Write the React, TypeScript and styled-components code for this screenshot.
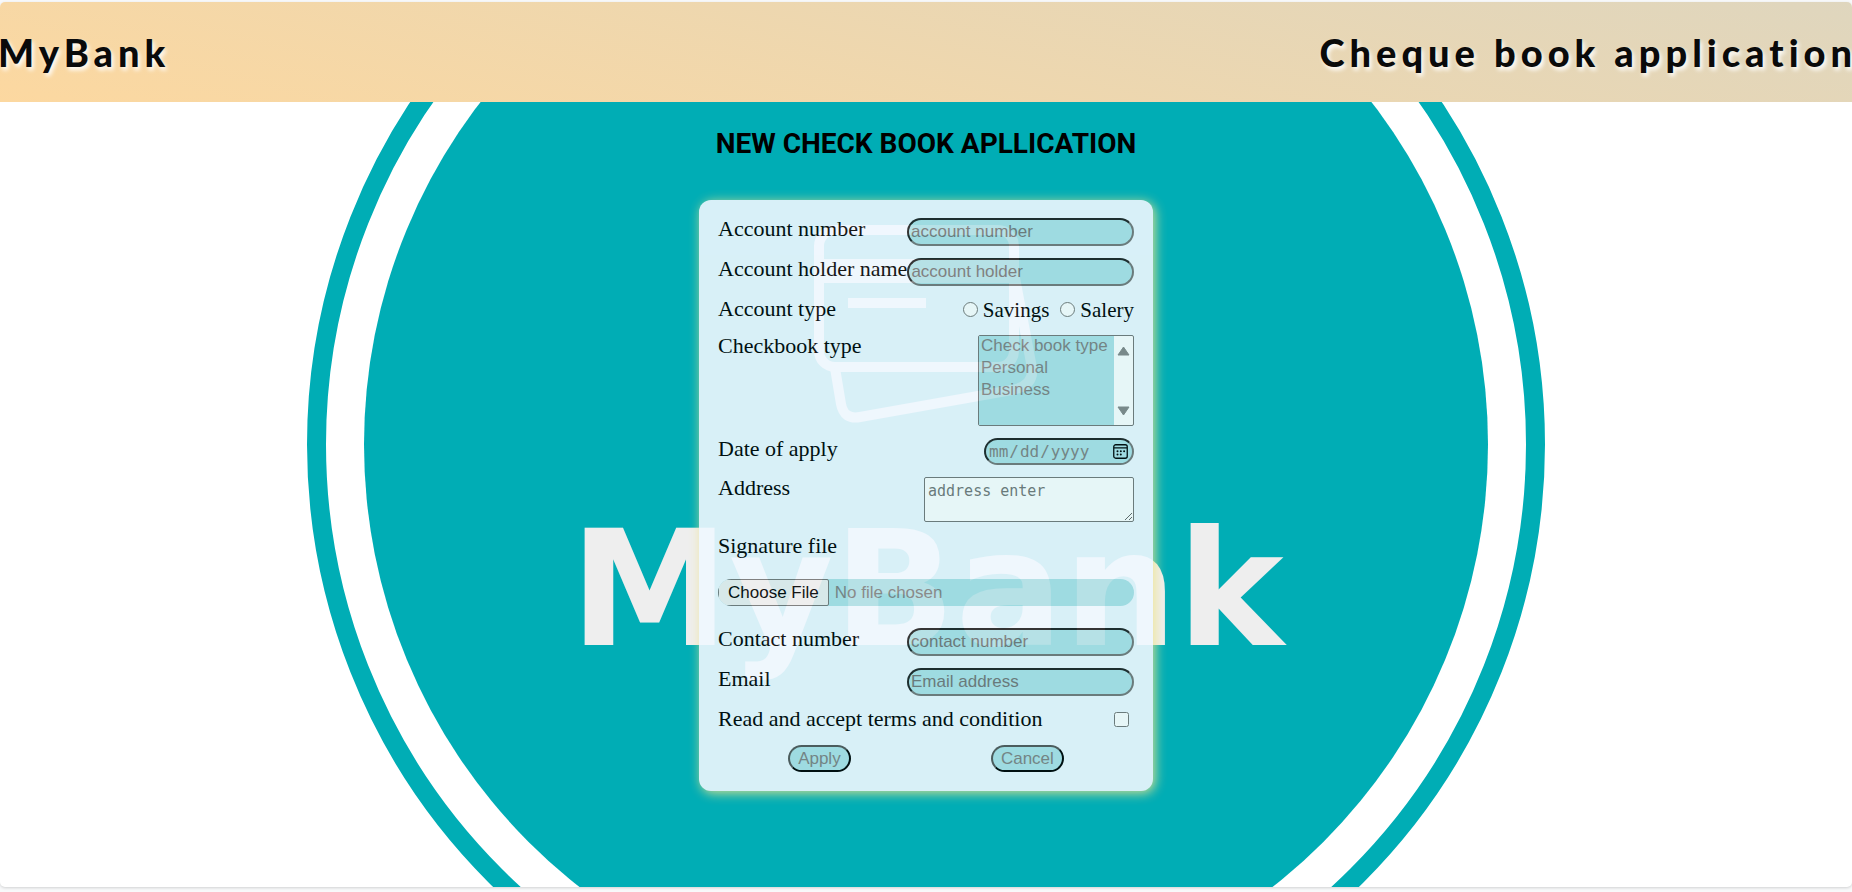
import React from "react";
import styled, { createGlobalStyle } from "styled-components";

const GlobalStyle = createGlobalStyle`
  *, *::before, *::after { box-sizing: border-box; }
  body {
    margin: 0;
    background: #f8f9fa;
    overflow-x: hidden;
    font-family: "Liberation Serif", "Times New Roman", serif;
  }
`;

const sans = `"Liberation Sans", Arial, sans-serif`;
const mono = `"DejaVu Sans Mono", Consolas, monospace`;

const calendarIcon = `data:image/svg+xml,${encodeURIComponent(
  `<svg xmlns="http://www.w3.org/2000/svg" viewBox="0 0 15 15"><rect x=".75" y=".75" width="13.500" height="13.500" rx="2" fill="none" stroke="#000" stroke-width="1.300"/><path d="M1 3.800H14" stroke="#000" stroke-width="1.200"/><g fill="#000"><circle cx="4.500" cy="7.200" r="1"/><circle cx="7.800" cy="7.200" r="1"/><circle cx="11.100" cy="7.200" r="1"/><circle cx="4.500" cy="10.600" r="1"/><circle cx="7.800" cy="10.600" r="1"/></g></svg>`
)}`;

const Page = styled.div`
  position: relative;
  min-height: calc(100vh - 7px);
  margin: 2px 0 5px;
  border-radius: 5px;
  background: #fff;
  box-shadow: 0 1px 3px rgba(0, 0, 0, 0.16);
  overflow: hidden;
`;

const Backdrop = styled.svg`
  position: absolute;
  inset: 0;
  width: 100%;
  height: 100%;
`;

const Header = styled.header`
  position: relative;
  display: flex;
  justify-content: space-between;
  align-items: center;
  height: 100px;
  margin: 0 -5px 0 -2px;
  background: linear-gradient(15deg, #fcd8a0, #dfd6be);
`;

const Brand = styled.h1`
  margin: 0;
  color: #0a0a0a;
  font: 900 38px/48px Lato, "Gill Sans", sans-serif;
  letter-spacing: 5px;
  white-space: nowrap;
  text-shadow: 2px 3px 4px #fff;
`;

const Main = styled.main`
  position: relative;
  display: flex;
  flex-direction: column;
  align-items: center;
  gap: 40px;
  padding: 26px 0 24px;
`;

const Title = styled.h2`
  margin: 0;
  color: #000;
  font: 700 28px/32px Roboto, sans-serif;
`;

const Form = styled.form`
  display: flex;
  flex-direction: column;
  gap: 12px;
  width: 454px;
  max-width: 100%;
  padding: 18px 19px 19px;
  border-radius: 12px;
  background: aliceblue;
  opacity: 0.9;
  box-shadow: 2px 2px 12px khaki;
`;

const Row = styled.div<{ $height?: number }>`
  display: flex;
  justify-content: space-between;
  align-items: flex-start;
  min-height: ${(p) => p.$height ?? 28}px;
`;

const Label = styled.label`
  color: #000;
  font-size: 22px;
  line-height: 22px;
  white-space: nowrap;
`;

const Field = styled.input`
  width: 227px;
  height: 28px;
  padding: 1px 2px;
  border: 2px inset #767676;
  border-radius: 15px;
  background: powderblue;
  color: gray;
  font: 17px ${sans};
`;

const DateField = styled(Field)`
  width: 150px;
  height: 27px;
  padding: 0 4px 0 2px;
  font: 16px ${mono};

  &::-webkit-calendar-picker-indicator {
    width: 15px;
    height: 15px;
    margin: 0;
    padding: 0;
    background: url("${calendarIcon}") center / 15px 15px no-repeat;
  }
`;

const Choices = styled.div`
  display: flex;
  gap: 11px;
`;

const Choice = styled.label`
  display: flex;
  gap: 5px;
  font-size: 21px;
  line-height: 24px;
`;

const Tick = styled.input`
  width: 15px;
  height: 15px;
  margin: 4px 0 0;
`;

const AcceptTick = styled(Tick)`
  margin-right: 5px;
`;

const ListBox = styled.div`
  display: flex;
  width: 156px;
  height: 91px;
  border: 1px solid #767676;
  border-radius: 2px;
  background: #fff;
  overflow: hidden;
`;

const List = styled.select`
  flex: 1;
  min-width: 0;
  padding: 0;
  border: 0;
  border-radius: 0;
  background: powderblue;
  color: gray;
  font: 17px ${sans};
  overflow: hidden;

  option {
    min-height: 22px;
    padding: 0 2px;
    line-height: 20px;
  }
`;

const Scroller = styled.div`
  display: flex;
  flex-direction: column;
  justify-content: space-between;
  align-items: center;
  width: 19px;
  padding: 10px 0 9px;
`;

const Address = styled.textarea`
  width: 210px;
  height: 45px;
  padding: 3px;
  border: 1px solid #767676;
  border-radius: 2px;
  font: 15px/20px ${mono};
`;

const FileField = styled.input`
  width: 100%;
  height: 27px;
  margin: 10px 0;
  border-radius: 15px;
  background: powderblue;
  color: gray;
  font: 17px ${sans};

  &::file-selector-button {
    height: 27px;
    margin: 0 6px 0 0;
    padding: 0 9px;
    border: 1px solid #767676;
    border-radius: 2px;
    background: #efefef;
    color: #000;
    font: 17px ${sans};
  }
`;

const Actions = styled.div`
  display: flex;
  justify-content: space-around;
`;

const Action = styled.button`
  height: 27px;
  padding: 0 8px;
  border: 2px outset #000;
  border-radius: 15px;
  background: powderblue;
  color: gray;
  font: 17px ${sans};
`;

function BankLogo() {
  return (
    <Backdrop viewBox="0 0 1852 885" preserveAspectRatio="xMidYMid slice" aria-hidden="true">
      <circle cx="926" cy="442.5" r="609.5" fill="none" stroke="#00adb5" strokeWidth="19" />
      <circle cx="926" cy="442.5" r="562" fill="#00adb5" />
      <g fill="none" stroke="#eee" strokeWidth="10">
        <rect x="819" y="228" width="195" height="137" rx="16" />
        <path d="M848 301H926" />
        <path d="M835 366L841 402Q844 418 860 415L1012 388Q1034 384 1032 366L1015 276" />
      </g>
      <path d="M819 257H1014V281H819Z" fill="#eee" />
      <text x="570" y="643" fill="#eee" fontFamily="DejaVu Sans" fontWeight="700" fontSize="160">
        MyBank
      </text>
    </Backdrop>
  );
}

type TextRowProps = { id: string; label: string; placeholder: string; type?: string };

function TextRow({ id, label, placeholder, type = "text" }: TextRowProps) {
  return (
    <Row>
      <Label htmlFor={id}>{label}</Label>
      <Field id={id} type={type} placeholder={placeholder} />
    </Row>
  );
}

export default function App() {
  return (
    <>
      <GlobalStyle />
      <Page>
        <BankLogo />
        <Header>
          <Brand>MyBank</Brand>
          <Brand as="div">Cheque book application</Brand>
        </Header>
        <Main>
          <Title>NEW CHECK BOOK APLLICATION</Title>
          <Form onSubmit={(e: React.FormEvent) => e.preventDefault()}>
            <TextRow id="number" label="Account number" placeholder="account number" />
            <TextRow id="holder" label="Account holder name" placeholder="account holder" />
            <Row $height={25}>
              <Label as="span">Account type</Label>
              <Choices role="radiogroup" aria-label="Account type">
                <Choice>
                  <Tick type="radio" name="type" />
                  Savings
                </Choice>
                <Choice>
                  <Tick type="radio" name="type" />
                  Salery
                </Choice>
              </Choices>
            </Row>
            <Row>
              <Label htmlFor="book">Checkbook type</Label>
              <ListBox>
                <List id="book" size={4}>
                  <option>Check book type</option>
                  <option>Personal</option>
                  <option>Business</option>
                </List>
                <Scroller aria-hidden="true">
                  <svg width="13" height="10" viewBox="0 0 13 10">
                    <path d="M6.500 1L12 9H1Z" fill="#868686" stroke="#868686" strokeLinejoin="round" />
                  </svg>
                  <svg width="13" height="10" viewBox="0 0 13 10">
                    <path d="M6.500 9L12 1H1Z" fill="#868686" stroke="#868686" strokeLinejoin="round" />
                  </svg>
                </Scroller>
              </ListBox>
            </Row>
            <Row $height={27}>
              <Label htmlFor="date">Date of apply</Label>
              <DateField id="date" type="date" />
            </Row>
            <Row $height={46}>
              <Label htmlFor="address">Address</Label>
              <Address id="address" placeholder="address enter" />
            </Row>
            <Row $height={22}>
              <Label htmlFor="signature">Signature file</Label>
            </Row>
            <FileField id="signature" type="file" />
            <TextRow id="contact" label="Contact number" placeholder="contact number" type="tel" />
            <TextRow id="email" label="Email" placeholder="Email address" type="email" />
            <Row $height={25}>
              <Label htmlFor="terms">Read and accept terms and condition</Label>
              <AcceptTick id="terms" type="checkbox" />
            </Row>
            <Actions>
              <Action type="submit">Apply</Action>
              <Action type="reset">Cancel</Action>
            </Actions>
          </Form>
        </Main>
      </Page>
    </>
  );
}
